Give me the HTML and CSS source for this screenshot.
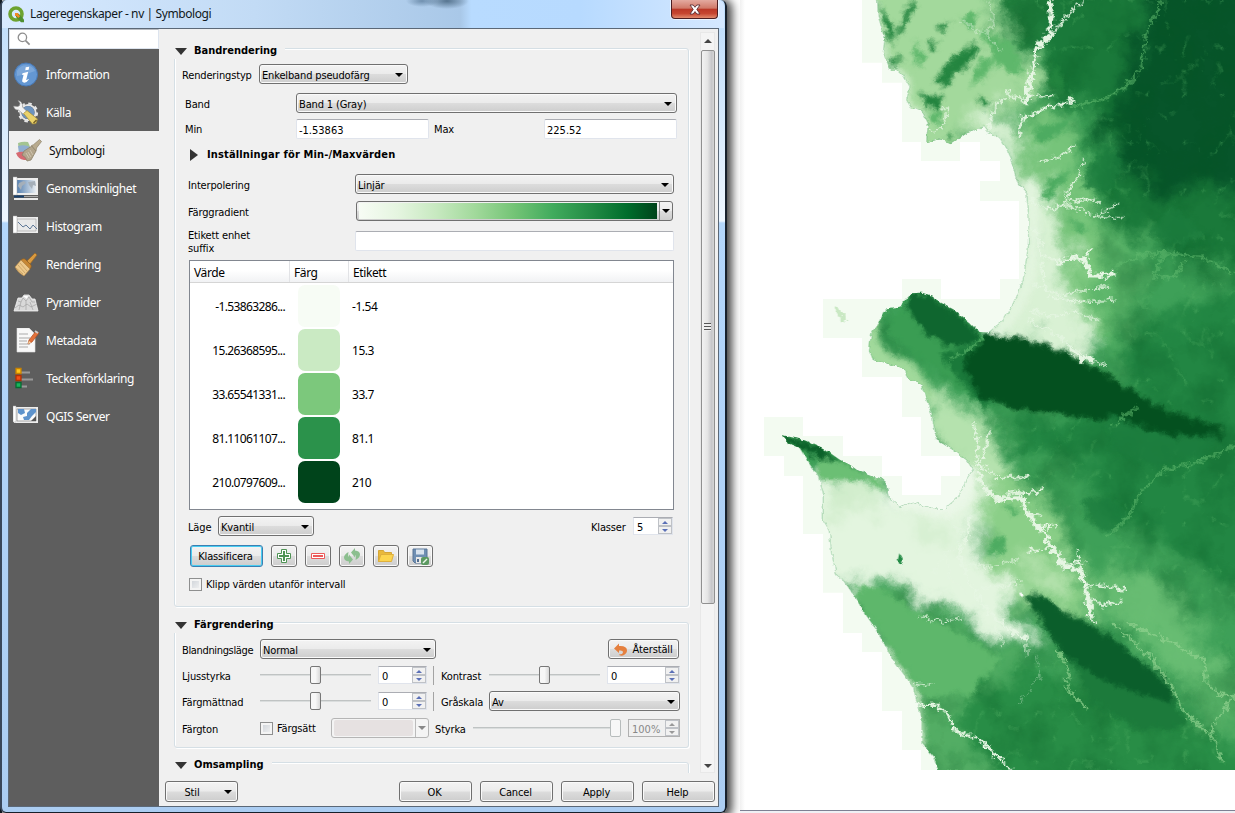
FILE: index.html
```html
<!DOCTYPE html>
<html lang="sv">
<head>
<meta charset="utf-8">
<title>Lageregenskaper - nv | Symbologi</title>
<link rel="stylesheet" href="styles.css">
</head>
<body>
<div class="screen">
<div class="window">
  <header class="titlebar">
    <svg class="logo" width="17" height="17" viewBox="0 0 17 17"><circle cx="8" cy="8" r="6" fill="none" stroke="#6da32f" stroke-width="3.6"/><path d="M8 8l3 0 5 5.5v2.8h-3L8 11z" fill="#4f8f31"/><path d="M7 7h3.4v1.5l1.7 1.7-1.8 1.7-1.8-1.8H7z" fill="#f08a24"/></svg>
    <h1 class="title">Lageregenskaper - nv | Symbologi</h1>
    <button class="close"><svg width="12" height="11" viewBox="0 0 12 11"><path d="M1 1h3.2L6 3.3 7.8 1H11L7.8 5.4 11 10H7.8L6 7.6 4.2 10H1l3.2-4.6z" fill="#fff" stroke="#5b3035" stroke-width=".9"/></svg></button>
  </header>
  <div class="client">
    <nav class="sidebar">
      <div class="search"><svg width="14" height="14" viewBox="0 0 14 14"><circle cx="5.4" cy="5.4" r="4.2" fill="none" stroke="#8e8e8e" stroke-width="1.3"/><path d="M8.6 8.6l4 4" stroke="#8e8e8e" stroke-width="1.7"/></svg></div>
      <a class="item"><svg width="26" height="26" viewBox="0 0 26 26"><circle cx="13" cy="12.500" r="11.500" fill="#6497d2" stroke="#4878b4"/><path d="M4 9a10 10 0 0 1 18 0q-9 4-18 5z" fill="#8cb2de" opacity=".6"/><path d="M12.7 5.2l3.5-.5-.5 3.100-3.400.4zM9.500 11.200l5.700-1.500-2 8.200q.8.3 2-1l.7.7q-2.400 3.600-5.300 3-1.900-.4-1.400-2.400l1.400-5.400-1.500.2z" fill="#fff"/></svg><span>Information</span></a>
      <a class="item"><svg width="26" height="26" viewBox="0 0 26 26"><g fill="none" stroke="#e6e6e6"><circle cx="15" cy="12.5" r="7.6" stroke-width="2"/><circle cx="15" cy="12.5" r="9" stroke-width="2.2" stroke-dasharray="3.5 3.57"/></g><circle cx="15" cy="12.5" r="6.5" fill="#6c93bf"/><path d="M.5 6q1 4.500 5 4l5 4.500 3.500-3L9.500 7Q10 1.500 5 .5L7 3.500Q7 6 4.500 6.500z" fill="#f2f2f2" stroke="#888" stroke-width=".6"/><path d="M10.500 13.500l3.500-3 10.500 8.500-1.500 4.500-3.500.5z" fill="#ead26b" stroke="#a28b39" stroke-width=".7"/><path d="M20.500 23l3-3" stroke="#735f27" stroke-width="1.500"/></svg><span>Källa</span></a>
      <a class="item active"><svg width="26" height="26" viewBox="0 0 26 26"><path d="M2 5q5-2 10-1l3 7-9 4q-4-5-4-10" fill="#a3c491"/><path d="M2 8q7-2 12 1l-4 8-7-1z" fill="#8faed0"/><path d="M0 15q4-2 9-1l4 8-5 0q-6-1-8-7" fill="#d66a72"/><path d="M8 13l8-5 4 5-5 9-4 1q-1-4-5-6z" fill="#b2a58c" stroke="#8c8068" stroke-width=".8"/><path d="M15.500 7.500l2-.8 6-5.200 2 2-5 6.500-.5 3z" fill="#b9ab8f" stroke="#8d8168" stroke-width=".7"/><path d="M10 15l3 5m-1-6l3 5m-1-7l3 5" stroke="#d5ccb8" stroke-width=".8"/></svg><span>Symbologi</span></a>
      <a class="item"><svg width="26" height="26" viewBox="0 0 26 26"><defs><linearGradient id="ocean"><stop stop-color="#5580b0"/><stop offset="1" stop-color="#e8edf2"/></linearGradient></defs><path d="M1 2h24v17H1z" fill="#ededed"/><path d="M4 4h19v13H4z" fill="url(#ocean)"/><path d="M6 7l5-2 2 2-4 3-1 4-3-4zm9-1l7-1 1 5-3-1-1 4-3-4z" fill="#a5afb9"/><path d="M0 1h4v18H0z" fill="#fff" stroke="#aaa" stroke-width=".5"/><path d="M1 20.500h10" stroke="#17406f" stroke-width="2"/><path d="M11 20.500h14" stroke="#aaa"/><path d="M1 23h24" stroke="#e8e8e8" stroke-width="2"/></svg><span>Genomskinlighet</span></a>
      <a class="item"><svg width="26" height="26" viewBox="0 0 26 26"><path d="M1 3h24v16H1z" fill="#ededed"/><path d="M4 5h19v12H4z" fill="#e9e9e9" stroke="#aaa" stroke-width=".7"/><path d="M0 2h4v17H0z" fill="#fff" stroke="#aaa" stroke-width=".5"/><path d="M5 8l5 5 3-2 4 4 3-4 4 4" fill="none" stroke="#5e7897"/></svg><span>Histogram</span></a>
      <a class="item"><svg width="26" height="26" viewBox="0 0 26 26"><path d="M14 9l8-8 2 2-7 9" fill="#d99a40" stroke="#986523" stroke-width=".7"/><path d="M8 8q2-2 4-1l6 6q1 2-1 4z" fill="#c68735" stroke="#8e5d20" stroke-width=".7"/><path d="M8 8l9 9-6 7q-6-3-9-9z" fill="#ecc88b" stroke="#b58643" stroke-width=".6"/><path d="M5 13l7 8m-5-10l7 8M3 16l7 6" stroke="#bf985b" stroke-width=".7"/></svg><span>Rendering</span></a>
      <a class="item"><svg width="26" height="26" viewBox="0 0 26 26"><path d="M1 21l4-13h4l2-3h5l3 4h3l3 12z" fill="#d9d9d9" stroke="#f3f3f3" stroke-width=".8"/><path d="M5 11l3 1 2-4 3 3 3-4 3 5 3 0M2 18l4-3 4 2 4-3 4 3 6-3M8 12l-2 8m7-9v9m4-8l3 8" fill="none" stroke="#9b9b9b" stroke-width=".6"/><path d="M10 6l4 3 1-3z" fill="#fff"/></svg><span>Pyramider</span></a>
      <a class="item"><svg width="26" height="26" viewBox="0 0 26 26"><path d="M4 0h12l6 6v18H4z" fill="#f8f8f8" stroke="#ddd" stroke-width=".6"/><path d="M6 6h9M6 10h11M6 13h8M6 16h11M6 19h9" stroke="#aaa"/><path d="M15 16l1-4 7-9 3 2-7 9z" fill="#e3713a" stroke="#ae4f23" stroke-width=".7"/><path d="M15 16l1-3 2 1.500z" fill="#f6d9ac"/><path d="M22 3l3 2" stroke="#ccc" stroke-width="2"/></svg><span>Metadata</span></a>
      <a class="item"><svg width="26" height="26" viewBox="0 0 26 26"><path d="M8 6.500h9M8 13.500h12M8 20.500h6" stroke="#999" stroke-width="2"/><path d="M3 2.500h5v5H3z" fill="#ffc61a" stroke="#c98200" stroke-width="1.300"/><path d="M3 9.500h5v5H3z" fill="#f24e15" stroke="#b23000" stroke-width="1.300"/><path d="M3 16.500h5v5H3z" fill="#18b55c" stroke="#066b31" stroke-width="1.300"/></svg><span>Teckenförklaring</span></a>
      <a class="item"><svg width="26" height="26" viewBox="0 0 26 26"><path d="M1 3h24v16H1z" fill="#eee"/><path d="M4 5h19v12H4z" fill="#fbfbfb" stroke="#888" stroke-width=".7"/><path d="M5 5h6l1 4-4 2-3-2zm9 4l4-4h5v3l-4 4-3 4h-5l-1-3 4-1z" fill="#5e93cc"/><path d="M18 17l5-5v5z" fill="#555"/><path d="M0 2h3v16H0z" fill="#fff" stroke="#aaa" stroke-width=".5"/></svg><span>QGIS Server</span></a>
    </nav>
    <main class="main">
      <div class="scroll-area">
        <div class="content">
          <section class="group band">
            <h2 class="legend"><i class="tri"></i>Bandrendering</h2>
            <div class="row r-type"><label>Renderingstyp</label><div class="combo">Enkelband pseudofärg<i class="arrow"></i></div></div>
            <div class="row r-band"><label>Band</label><div class="combo">Band 1 (Gray)<i class="arrow"></i></div></div>
            <div class="row r-min"><label>Min</label><div class="field">-1.53863</div><label class="max">Max</label><div class="field">225.52</div></div>
            <h3 class="sub"><i class="tri right"></i>Inställningar för Min-/Maxvärden</h3>
            <div class="row r-interp"><label>Interpolering</label><div class="combo">Linjär<i class="arrow"></i></div></div>
            <div class="row r-ramp"><label>Färggradient</label><div class="ramp"><div class="ramp-fill"></div><div class="ramp-drop"><i class="arrow"></i></div></div></div>
            <div class="row r-suffix"><label>Etikett enhet<br>suffix</label><div class="field"></div></div>
            <div class="table">
              <div class="thead"><span>Värde</span><span>Färg</span><span>Etikett</span></div>
              <div class="tr"><span>-1.53863286...</span><b class="c1"></b><span>-1.54</span></div>
              <div class="tr"><span>15.26368595...</span><b class="c2"></b><span>15.3</span></div>
              <div class="tr"><span>33.65541331...</span><b class="c3"></b><span>33.7</span></div>
              <div class="tr"><span>81.11061107...</span><b class="c4"></b><span>81.1</span></div>
              <div class="tr"><span>210.0797609...</span><b class="c5"></b><span>210</span></div>
            </div>
            <div class="row r-mode"><label>Läge</label><div class="combo">Kvantil<i class="arrow"></i></div><label class="classes">Klasser</label><div class="spin">5<span class="steps"><i></i><i></i></span></div></div>
            <div class="tools">
              <button class="btn focus">Klassificera</button>
              <button class="btn"><svg width="16" height="16" viewBox="0 0 16 16"><path d="M5.500 1.500h5v4h4v5h-4v4h-5v-4h-4v-5h4z" fill="#fff" stroke="#4f9455"/><path d="M8 3v10M3 8h10" stroke="#4f9455" stroke-width="2"/></svg></button>
              <button class="btn"><svg width="16" height="16" viewBox="0 0 16 16"><path d="M1.500 5.500h13v5h-13z" fill="#fff" stroke="#ec5a5a"/><path d="M3 8h10" stroke="#ec5a5a" stroke-width="2"/></svg></button>
              <button class="btn"><svg width="18" height="16" viewBox="0 0 18 16"><path d="M8 4.500L12 0v2.500q5 .5 5 4 0 3-4.500 5.500.8-4-.5-5V9.500zM10 11.500L6 16v-2.500q-5-.5-5-4Q1 6.500 5.500 4q-.8 4 .5 5V6.500z" fill="#8cbf8f"/></svg></button>
              <button class="btn"><svg width="18" height="16" viewBox="0 0 18 16"><path d="M1.500 13.500v-11h5l1 2h7v2H4z" fill="#e9b93c" stroke="#d5a636"/><path d="M1.500 13.500L4 6.500h12.500l-2 7z" fill="#fcd54f" stroke="#dfb03d"/></svg></button>
              <button class="btn"><svg width="17" height="17" viewBox="0 0 17 17"><path d="M1 1h14v14H3l-2-2z" fill="#6f8fb3" stroke="#587596"/><path d="M4 1.500h8v5H4z" fill="#d9e3ee"/><path d="M4 9h8v6H4z" fill="#e8e8e8"/><path d="M5 11h2v3H5z" fill="#526d8d"/><rect x="9" y="9" width="8" height="8" rx="2" fill="#5b9961"/><path d="M11 15l4-4" stroke="#e9f4e9" stroke-width="1.500"/></svg></button>
            </div>
            <div class="clip"><i class="check"></i>Klipp värden utanför intervall</div>
          </section>
          <section class="group color">
            <h2 class="legend"><i class="tri"></i>Färgrendering</h2>
            <div class="row r-blend"><label>Blandningsläge</label><div class="combo">Normal<i class="arrow"></i></div><button class="btn reset"><svg width="14" height="13" viewBox="0 0 14 13"><path d="M0 5.500L5 .5V3q8-.5 8 4.500 0 3-4 5-4 .5-4-1 4 0 4-2.500Q9 7 5 7.500V10z" fill="#e5803f"/></svg>Återställ</button></div>
            <div class="row r-two"><label>Ljusstyrka</label><div class="slider"><i></i></div><div class="spin">0<span class="steps"><i></i><i></i></span></div><label class="second">Kontrast</label><div class="slider"><i></i></div><div class="spin wide">0<span class="steps"><i></i><i></i></span></div></div>
            <div class="row r-two sat"><label>Färgmättnad</label><div class="slider"><i></i></div><div class="spin">0<span class="steps"><i></i><i></i></span></div><label class="second">Gråskala</label><div class="combo">Av<i class="arrow"></i></div></div>
            <div class="row r-hue"><label>Färgton</label><i class="check"></i><label class="colorize">Färgsätt</label><div class="ramp off"><div class="ramp-fill"></div><div class="ramp-drop"><i class="arrow"></i></div></div><label class="strength">Styrka</label><div class="slider off"><i></i></div><div class="spin off">100%<span class="steps"><i></i><i></i></span></div></div>
          </section>
          <section class="group resample"><h2 class="legend"><i class="tri"></i>Omsampling</h2></section>
        </div>
        <div class="scrollbar"><i class="up"></i><div class="thumb"><i></i></div><i class="down"></i></div>
      </div>
      <footer class="footer">
        <button class="btn style">Stil<i class="arrow"></i></button>
        <button class="btn">OK</button><button class="btn">Cancel</button><button class="btn">Apply</button><button class="btn">Help</button>
      </footer>
    </main>
  </div>
</div>
<div class="canvas">
<svg class="map" width="495" height="810" viewBox="0 0 1485 2430">
  <defs>
    <clipPath id="land"><path d="M410 -60L415 50 435 110 430 160 450 205 490 225 510 260 500 300 515 325 545 330 565 370 560 425 600 418 635 430 680 400 730 380 745 400 780 415 800 445 815 490 835 550 860 580 867 650 865 740 850 840 820 910 790 960 745 998 715 995 690 970 640 930 585 900 575 887 545 878 515 880 480 920 440 925 420 960 395 1000 388 1050 400 1080 440 1090 490 1105 510 1140 545 1155 560 1200 575 1240 590 1320 640 1350 680 1380 700 1410 680 1440 655 1490 610 1530 560 1520 520 1505 480 1520 445 1490 438 1450 420 1435 350 1410 330 1395 300 1380 250 1345 200 1322 125 1305 145 1330 180 1345 200 1380 235 1430 250 1480 250 1560 268 1590 275 1660 290 1725 310 1740 345 1790 375 1840 410 1890 440 1940 460 1980 520 2060 530 2100 545 2150 545 2230 580 2270 595 2310V2400H1560V-60Z"/></clipPath>
    <clipPath id="extent"><path d="M0 0H1485V2310H0z"/></clipPath>
    <filter id="soft" x="-10%" y="-10%" width="120%" height="120%" color-interpolation-filters="sRGB"><feGaussianBlur stdDeviation="24" result="b"/><feTurbulence type="fractalNoise" baseFrequency=".01" numOctaves="5" seed="4"/><feDisplacementMap in="b" scale="130" xChannelSelector="R" yChannelSelector="G"/></filter>
    <filter id="edge" x="-10%" y="-10%" width="120%" height="120%" color-interpolation-filters="sRGB"><feGaussianBlur stdDeviation="7" result="b"/><feTurbulence type="fractalNoise" baseFrequency=".03" numOctaves="4" seed="9"/><feDisplacementMap in="b" scale="34" xChannelSelector="R" yChannelSelector="G"/></filter>
    <filter id="creek" x="-10%" y="-10%" width="120%" height="120%" color-interpolation-filters="sRGB"><feTurbulence type="fractalNoise" baseFrequency=".06" numOctaves="3" seed="3"/><feDisplacementMap in="SourceGraphic" scale="30" xChannelSelector="R" yChannelSelector="G"/><feGaussianBlur stdDeviation="1.300"/></filter>
    <filter id="shore" x="-5%" y="-5%" width="110%" height="110%" color-interpolation-filters="sRGB"><feTurbulence type="fractalNoise" baseFrequency=".05" numOctaves="3" seed="8"/><feDisplacementMap in="SourceGraphic" scale="14" xChannelSelector="R" yChannelSelector="G"/></filter>
    <filter id="beach" x="-20%" y="-20%" width="140%" height="140%"><feGaussianBlur stdDeviation="9"/></filter>
    <filter id="darkNoise" x="0" y="0" width="100%" height="100%" color-interpolation-filters="sRGB"><feTurbulence type="fractalNoise" baseFrequency=".008 .007" numOctaves="7" seed="12"/><feColorMatrix values="0 0 0 0 .02  0 0 0 0 .33  0 0 0 0 .13  2.600 0 0 0 -1.050"/></filter>
    <filter id="veins" x="0" y="0" width="100%" height="100%" color-interpolation-filters="sRGB"><feTurbulence type="turbulence" baseFrequency=".009 .007" numOctaves="5" seed="31"/><feColorMatrix values="0 0 0 0 .36  0 0 0 0 .72  0 0 0 0 .42  0 -7 0 0 1.100"/></filter>
  </defs>
  <path fill="#f3fbf1" d="M366 0V188H426V248H486V426H543V483H660V426H720V483H780V543H720V603H837V837H780V897H603V837H486V897H249V1014H366V1131H486V1251H543V1368H660V1428H603V1485H486V1428H426V1368H309V1308H189V1251H72V1368H132V1428H189V1602H249V1778H309V1899H366V1956H426V2133H486V2250H543V2310H1485V0Z"/>
  <g clip-path="url(#extent)"><g filter="url(#shore)"><g clip-path="url(#land)">
    <path fill="#3ea058" d="M-60-60H1560V2400H-60z"/>
    <g filter="url(#soft)">
      <path fill="#1f7c3c" d="M740-90H1000L900 150 810 140z"/>
      <path fill="#1a793a" d="M980-90H1600V860L1390 790 1160 700 1060 520 1100 350 930 270 920 80z"/>
      <path fill="#07552a" d="M1240-90H1600V540L1250 580 1090 440 1150 300z"/>
      <path fill="#5cb56a" d="M1000 600L1220 720 1180 960 1130 1100 960 900z"/>
      <path fill="#228643" d="M1130 1030L1600 820V1760L1400 1720 1220 1600 1060 1500 1040 1400 790 1360 830 1260 1200 1240z"/>
      <path fill="#53ad64" d="M330 1790L480 1790 700 1920 840 2000 800 2380 540 2380 500 2060z"/>
      <path fill="#288d46" d="M720 2040L940 2020 1060 2090 1250 2080 1330 2170 1560 2280V2400H840L640 2200z"/>
      <path fill="#53ad64" d="M1320 2060L1560 1990V2200H1400z"/>
    </g>
    <path d="M0 0H1485V2310H0z" filter="url(#darkNoise)" opacity=".3"/>
    <path d="M0 0H1485V2310H0z" filter="url(#veins)" opacity=".38"/>
    <g filter="url(#soft)">
      <path fill="#a3d99c" d="M340-90H720L790 60 810 180 900 150 900 280 800 330 720 400 560 500 400 250z"/>
      <path fill="#80ca80" d="M820 350L1000 330 1040 560 1060 800 1090 1000 930 1020 860 750z" opacity=".85"/>
      <path fill="#d9f1d4" d="M740 300L830 370 870 540 960 620 960 700 980 830 1050 960 1060 1070 900 1040 720 1020 830 860 860 700 800 450 700 420z"/>
      <path fill="#b5e2ae" d="M540 1160L660 1180 780 1320 820 1460 800 1500 700 1460 570 1330z"/>
      <path fill="#6dc075" d="M1020 1700L1240 1730 1400 1900 1440 2040 1330 2080 1270 2000z" opacity=".9"/>
      <path fill="#8bcf88" d="M720 1430L850 1450 930 1500 1000 1700 1100 1850 1000 1850 840 1800 740 1740z"/>
      <path fill="#b3e1ac" d="M850 1680L960 1690 1000 1780 860 1780z"/>
      <path fill="#e3f5df" d="M150 1440L440 1440 540 1500 700 1410 740 1500 700 1640 800 1740 830 1830 900 1900 860 1960 700 1880 560 1800 440 1750 260 1790 200 1600z"/>
      <path fill="#c9eac3" d="M260 1450L420 1440 420 1530 260 1560zM500 1520L620 1580 660 1650 540 1590z" opacity=".7"/>
    </g>
    <g filter="url(#beach)" fill="none">
      <path d="M388 950Q360 1080 500 1110L560 1200" stroke="#a1d99b" stroke-width="60"/>
      <path d="M868 540Q900 770 850 880T740 1010" stroke="#e2f4de" stroke-width="40"/>
      <path d="M690 1400Q690 1490 620 1530L440 1500" stroke="#eaf7e7" stroke-width="46"/>
      <path d="M400 0L440 190 500 240 500 320 560 350M440 1940L530 2080 545 2240" stroke="#d5efcf" stroke-width="20"/>
      <path d="M370 1840L410 1890 440 1940" stroke="#e5f5e0" stroke-width="5"/>
    </g>
    <g filter="url(#edge)">
      <path fill="#3a9d53" d="M540 900L600 915 715 1000 735 1010 760 1060 700 1190 640 1150 540 1080 450 1010 450 960 490 930z"/>
      <path fill="#0f662f" d="M510 882L560 878 640 932 705 985 710 1025 650 1040 560 1010 505 930z"/>
      <path fill="#1a793a" d="M600 1060L720 1030 760 1100 740 1240 680 1170z"/>
      <path fill="#04501f" d="M735 1005L850 1013 950 1045 1060 1100 1180 1170 1250 1220 1440 1280 1450 1320 1290 1310 1180 1270 1000 1250 860 1230 720 1200 670 1090z"/>
      <path fill="#0b6029" d="M115 1300L190 1318 250 1345 285 1378 230 1374 190 1348 130 1325z"/>
      <path fill="#6bbf74" d="M230 1378L290 1378 350 1408 425 1440 435 1475 370 1440 240 1440z"/>
      <path fill="#5eb76b" d="M340 1785L370 1755 420 1765 520 1830 560 1850 700 1920 780 1970 700 2080 560 2090 480 1990z"/>
      <path fill="#0b5e2b" d="M850 1785L900 1785 980 1840 1100 1900 1200 1980 1280 2040 1310 2120 1200 2110 1070 2060 990 1990 920 1890z"/>
      <path fill="#1c7a3b" d="M990 1980L1130 2060 1310 2110 1350 2180 1200 2190 1060 2110z"/>
      <path fill="#23843f" d="M420 10L460 80 455 140 440 110zM500 20L530 0 490 90 460 130zM640 170L700 130 720 145 680 200 640 220 620 265 580 250zM540 280L610 290 600 330 560 320zM570 130L590 125 590 150 570 150zM590 80L630 65 610 100zM710 290L760 310 730 330zM925 200L960 200 975 275 940 260zM450 180L490 170 455 210zM620 400L640 410 630 430z"/>
      <path fill="#5eb76b" d="M720 180L760 170 750 220 690 260zM660 60L720 30 700 90zM560 340L610 330 600 380zM520 120L560 170 530 200zM720 90L820 130 850 230 770 200z"/>
      <path fill="#4dab61" d="M870 400L1010 340 980 390 910 430zM900 600L930 540 1000 500 930 600zM980 650L1050 690 1020 700zM740 1610L790 1620 800 1650 750 1670zM790 1505L840 1540 820 1550zM580 1820L640 1845 600 1840z"/>
      <path fill="#1c7c3d" d="M1060 480L1110 430 1150 500 1100 580 1020 560zM1220 700L1300 620 1400 700 1320 740zM1020 1500L1100 1490 1160 1550 1120 1600 1060 1580zM1100 1240L1300 1310 1440 1300 1400 1370 1250 1400 1120 1350z" opacity=".8"/>
    </g>
    <path fill="#238b45" d="M478 1660l10 18-2 16-8-2-4-14z"/>
    <g filter="url(#creek)" fill="none" stroke-linejoin="round">
      <g stroke="#5fb76c" stroke-width="8" opacity=".6"><path d="M1265 0L1220 100 1205 200 1160 260 1090 300 990 320M1485 820L1380 770 1270 760 1200 765 1130 800M1100 1610L1160 1560 1200 1480 1270 1410 1360 1390 1485 1340M1270 760L1240 830 1310 830 1330 780M630 1080L700 1040 730 1010M1120 1280L1190 1220"/></g>
      <g stroke="#8fd08d" stroke-width="7" opacity=".75"><path d="M950 1950L985 2000 980 2060 1040 2130M1120 1870L1240 1980 1280 2040 1330 2130 1400 2200M1160 1870L1300 1930 1390 1980 1400 2050 1440 2085 1485 2085 1410 2190 1450 2290"/></g>
      <g stroke="#e6f6e3">
        <path stroke-width="15" d="M930 0L935 50 930 100 890 150 880 200 865 260 858 315"/>
        <path stroke-width="5" d="M1030 0L970 60 935 110M860 290L790 295 765 320 745 395M870 285L940 290M800 270L810 295"/>
        <path stroke-width="4" opacity=".55" d="M750 0L760 60 740 110M660 60L740 110 790 160"/>
        <path stroke-width="7" d="M840 370L860 350 920 325 1000 300M840 350L840 410"/>
        <path stroke-width="5" d="M870 600L920 625 980 615 1080 650 1150 655M975 610L985 570 1020 520 1030 480M980 605L1040 595 1080 610M1080 640L1140 610M870 680L895 700 900 760 950 785M900 790L915 850M895 485L960 470 1000 440"/>
        <path stroke-width="13" d="M945 790L1000 770 1035 780 1050 825 1105 828 1125 810M1040 770L1055 745"/>
        <path stroke-width="4" d="M880 850L960 885 1110 860M920 890L1020 905 1130 900M870 930L940 948 1010 935 1080 965M860 960L960 1010 1010 1050 1100 1100"/>
        <path stroke-width="14" d="M990 1040L1020 1075 1060 1080M710 1410L740 1475 780 1500 845 1490 865 1545 910 1600 940 1650 975 1700 1020 1710 1045 1800 1055 1850"/>
        <path stroke-width="6" d="M1055 1850L1070 1870M700 1270L715 1330 710 1390 770 1430 870 1432M750 1290L720 1400M845 1485L910 1470M865 1545L900 1545M895 1580L950 1580M940 1640L860 1655M975 1690L1035 1690M1040 1760L1080 1755 1160 1770M1050 1795L1090 1815 1145 1805M780 1500L810 1480 850 1475M1010 1650L1025 1710"/>
        <path stroke-width="8" d="M685 1550L690 1600 660 1650 665 1690 700 1770 750 1840 810 1890 860 1920"/>
        <path stroke-width="3" d="M610 1540L640 1570 675 1615 600 1680 580 1720M670 1690L740 1700 840 1680M700 1770L840 1745M620 1680L630 1730 680 1780M750 1840L790 1940M860 1900L860 1970"/>
        <path stroke-width="3" opacity=".5" d="M890 1970L900 2030 840 2110"/>
        <path stroke-width="8" d="M525 2115L590 2115 630 2150 645 2190 730 2225 780 2280 820 2315"/>
        <path stroke-width="4" d="M520 2050L580 2055M540 1850L610 1865 660 1855M610 320L625 330 605 385 570 395"/>
      </g>
    </g>
    <path d="M838 1778l8 0 9 6-7 8-8-7z" fill="#fff"/>
  </g></g></g>
  <g filter="url(#creek)"><path d="M285 920L300 930 325 955 310 970 290 940z" fill="#c9e8c3"/></g>
</svg>
</div>
</div>
</body>
</html>
```
FILE: styles.css
```css
* { box-sizing: border-box; }
body { margin: 0; background: #fff; color: #000; font: 11px/14px "DejaVu Sans Condensed", "DejaVu Sans", sans-serif; letter-spacing: -.15px; }
h1, h2, h3 { margin: 0; font-size: inherit; }
button { font: inherit; letter-spacing: inherit; color: inherit; padding: 0; }
i { font-style: normal; flex: none; }
svg { flex: none; display: block; }
.screen { display: grid; grid-template-columns: 740px 495px; width: 1235px; height: 813px; overflow: hidden; background: linear-gradient(90deg, #1a2530 0 2px, #fff 2px); }
.window { width: 727px; height: 813px; padding: 0 8px 6px 6px; border: solid #17202b; border-width: 0 2px 1px; border-left-color: #39475a; border-radius: 6px; box-shadow: 2px 2px 10px 3px rgba(0,0,0,.75); background: linear-gradient(180deg, #bcdcfb 0, #d2e7fc 100px, #edf6ff 221px, #b3d6fb 223px, #abcdf2 100%); }
.titlebar { height: 28px; margin: 0 -7px 0 -6px; padding-left: 6px; display: flex; align-items: center; background: radial-gradient(ellipse 22px 8px at 445px 1px, #56748f, transparent), radial-gradient(ellipse 16px 6px at 420px 1px, #6f8fae, transparent), linear-gradient(90deg, #d8eaff 0, #c2dbf5 35%, #a9c8e8 63.5%, #b8dbff 65%, #b7daff 80%, #d5e8ff 100%); border-radius: 6px 6px 0 0; }
.title { margin-left: 5px; flex: 1; font: 12px/16px "Noto Sans", sans-serif; letter-spacing: -.4px; color: #101820; }
.close { width: 47px; height: 19px; margin-right: 6px; align-self: flex-start; display: flex; align-items: center; justify-content: center; border: 1px solid #4c1e22; border-top: 0; border-radius: 0 0 4px 4px; background: linear-gradient(#e4aaa0 0, #d07868 46%, #ba3727 50%, #c64631 75%, #e28a6d); box-shadow: 0 0 0 1px rgba(255,255,255,.6); }
.client { display: flex; width: 711px; height: 779px; border: 1px solid #5b6877; background: #f0f0f0; }
.sidebar { width: 150px; background: #5e5e5e; color: #fff; font: 12px/16px "Noto Sans", sans-serif; letter-spacing: -.4px; }
.search { height: 20px; margin-bottom: 6px; padding: 2px 0 0 7px; background: #fff; border: 1px solid #dde4ee; border-top-color: #b8bcc2; }
.item { display: flex; align-items: center; gap: 7px; height: 38px; padding: 1px 0 0 4px; }
.item span { padding-top: 1px; }
.item.active { background: #f0f0f0; color: #111; padding-left: 7px; }
.main { width: 559px; padding: 3px 3px 0 6px; }
.scroll-area { display: flex; height: 741px; }
.content { width: 535px; overflow: hidden; padding: 16px 11px 0 9px; }
.group { width: 515px; border: 1px solid #d5dfe5; border-radius: 3px; box-shadow: inset 1px 1px #fff, 1px 1px #fff; }
.band { height: 559px; }
.color { height: 126px; margin-top: 15px; }
.resample { height: 40px; margin-top: 14px; }
.legend, .sub { display: flex; align-items: center; font: bold 11px/16px "DejaVu Sans Condensed", "DejaVu Sans", sans-serif; letter-spacing: 0; height: 16px; color: #000; }
.legend { width: 111px; margin: -6px 0 0 -1px; background: #f0f0f0; }
.color .legend, .resample .legend { width: 98px; }
.tri { width: 12px; margin: 0 7px 0 1px; border: 6px solid transparent; border-top: 7px solid #333; border-bottom: 0; }
.tri.right { width: 8px; margin: 0 9px 0 0; border: 6px solid transparent; border-left: 8px solid #333; border-right: 0; }
.row { display: flex; align-items: center; height: 20px; padding-left: 7px; white-space: nowrap; }
.row label { flex: none; padding-top: 3px; }
.combo, .btn { height: 20px; border: 1px solid #707070; border-radius: 3px; background: linear-gradient(#f3f3f3 0, #ebebeb 48%, #dcdcdc 52%, #cdcdcd 100%); box-shadow: inset 0 0 0 1px #fafafa; }
.combo { display: flex; align-items: center; justify-content: space-between; padding: 3px 4px 0 2px; flex: none; }
.arrow { width: 8px; height: 4px; margin-bottom: 1px; border: 4px solid transparent; border-top: 4px solid #000; border-bottom: 0; }
.field { height: 20px; padding: 4px 2px 0; border: 1px solid #e0e4ec; border-top-color: #abadb3; border-radius: 2px; background: #fff; flex: none; }
.r-type { margin-top: 5px; }
.r-type label { width: 77px; }
.r-type .combo { width: 149px; }
.r-band { margin-top: 9px; padding-left: 10px; }
.r-band label, .r-min label { width: 111px; }
.r-band .combo { width: 381px; }
.r-min { margin-top: 6px; padding-left: 10px; }
.r-min label { padding-top: 2px; }
.r-min .field { width: 133px; letter-spacing: 0; }
.r-min .max { width: 115px; padding-left: 5px; }
.sub { margin: 8px 0 0 15px; letter-spacing: .15px; }
.r-interp { margin-top: 11px; padding-left: 13px; }
.r-interp label, .r-suffix label { width: 167px; }
.r-interp .combo, .r-suffix .field { width: 319px; }
.r-ramp { margin-top: 7px; padding-left: 13px; }
.r-ramp > label { width: 168px; }
.ramp { display: flex; width: 317px; height: 20px; border: 1px solid #707070; border-radius: 3px; background: linear-gradient(#f3f3f3 0, #ebebeb 48%, #dcdcdc 52%, #cdcdcd 100%); }
.ramp-fill { flex: 1; margin: 1px 2px; background: linear-gradient(90deg, #f7fcf5, #e5f5e0 13%, #c7e9c0 26%, #a1d99b 39%, #74c476 52%, #41ab5d 65%, #238b45 78%, #006d2c 90%, #00441b); }
.ramp-drop { width: 13px; border-left: 1px solid #8a8a8a; display: flex; align-items: center; justify-content: center; }
.r-suffix { margin-top: 10px; padding-left: 13px; line-height: 12.5px; }
.table { width: 485px; height: 250px; margin: 9px 0 0 14px; border: 1px solid #828790; background: #fff; font: 12px/16px "Noto Sans", sans-serif; letter-spacing: -.62px; }
.thead, .tr { display: grid; grid-template-columns: 100px 59px 1fr; }
.thead { height: 22px; border-bottom: 1px solid #d5d5d5; background: linear-gradient(#fff 45%, #f1f2f4); letter-spacing: -.4px; }
.thead span { padding: 4px 0 0 4px; border-right: 1px solid #e2e3e6; }
.thead span:last-child { border: 0; }
.tr { height: 44px; align-items: center; }
.tr span:first-child { text-align: right; padding-right: 5px; }
.tr b { width: 42px; height: 42px; margin-left: 8px; margin-top: 2px; border-radius: 7px; }
.tr span:last-child { padding-left: 3px; letter-spacing: -.45px; }
.tr span { padding-top: 4px; }
.c1 { background: #f7fcf5; } .c2 { background: #caeac3; } .c3 { background: #7cc87c; } .c4 { background: #2b924b; } .c5 { background: #00441b; }
.r-mode { margin-top: 6px; padding-left: 13px; }
.r-mode label { width: 30px; }
.r-mode .combo { width: 96px; }
.r-mode .classes { width: 42px; margin-left: 277px; }
.spin { display: flex; justify-content: space-between; width: 40px; height: 18px; padding: 3px 0 0 3px; border: 1px solid #e0e4ec; border-top-color: #abadb3; background: #fff; flex: none; }
.steps { display: grid; grid-template-rows: 8px 8px; gap: 0; width: 14px; height: 16px; margin-top: -3px; }
.steps i { border: 1px solid #bfc2c7; background: #f1f1f1; display: flex; align-items: center; justify-content: center; }
.steps i::before { content: ""; border: 3px solid transparent; border-bottom: 3px solid #5b70b7; border-top: 0; }
.steps i + i::before { transform: rotate(180deg); }
.tools { display: flex; gap: 8px; margin: 9px 0 0 15px; }
.btn { display: flex; align-items: center; justify-content: center; width: 26px; height: 22px; }
.btn.focus { width: 73px; padding: 1px 2px 0 0; border-color: #3c7fb1; box-shadow: inset 0 0 0 1px #48cdf2; }
.clip { display: flex; align-items: center; gap: 4px; margin: 10px 0 0 14px; height: 15px; letter-spacing: -.19px; }
.check { width: 13px; height: 13px; border: 1px solid #8e8f8f; background: linear-gradient(135deg, #cbd0d6, #f5f5f5); box-shadow: inset 0 0 0 2px #f4f4f4; }
.r-blend { margin-top: 6px; }
.r-blend label { width: 78px; letter-spacing: -.35px; }
.r-blend .combo { width: 176px; }
.btn.reset { width: 71px; height: 20px; margin-left: 172px; gap: 4px; padding-top: 1px; }
.r-two { height: 20px; margin-top: 6px; }
.r-two > label { width: 78px; padding-top: 3px; }
.slider { width: 111px; height: 19px; display: flex; align-items: center; justify-content: center; background: linear-gradient(#b2b6b6, #e7eaea) 0 8px / 100% 2px no-repeat; flex: none; }
.slider i { width: 11px; height: 18px; border: 1px solid #777; border-radius: 2px; background: linear-gradient(90deg, #f7f7f7 50%, #d9d9d9); }
.r-two .spin { width: 49px; margin-left: 7px; }
.r-two .second { width: 56px; height: 19px; padding: 4px 0 0 7px; margin-left: 6px; border-left: 1px solid #a3a3a3; }
.r-two .wide { width: 73px; margin-left: 7px; }
.sat { margin-top: 6px; }
.sat .combo { width: 191px; }
.r-hue { margin-top: 7px; }
.r-hue > label:first-child { width: 78px; padding-top: 3px; }
.r-hue .colorize { width: 54px; margin-left: 4px; padding-top: 2px; }
.ramp.off { width: 98px; border-color: #b5b5b5; background: #f4f4f4; }
.off .ramp-fill { background: #e6e1e1; border-radius: 2px; }
.off .ramp-drop { border-color: #bbb; }
.off .arrow { border-top-color: #888; }
.r-hue .strength { width: 38px; margin-left: 6px; }
.slider.off { width: 148px; justify-content: flex-end; }
.slider.off i { border-color: #b7bcbc; background: #f7f7f7; }
.spin.off { width: 52px; margin-left: 7px; color: #888; background: #f0f0f0; border-color: #b0b0b0; letter-spacing: 0; }
.off .steps i::before { border-bottom-color: #999; }
.scrollbar { width: 15px; background: #f4f4f4; border: 1px solid #e8e8e8; display: flex; flex-direction: column; align-items: center; }
.up, .down { border: 4px solid transparent; }
.up { margin: 6px 0 4px; border-bottom: 4px solid #444; border-top: 0; }
.thumb { width: 14px; height: 554px; margin-top: 3px; border: 1px solid #909090; border-radius: 2px; background: linear-gradient(90deg, #f2f2f2 0, #e5e5e5 45%, #c6c6c9 80%, #d6d6d6); display: flex; align-items: center; justify-content: center; }
.thumb i { width: 7px; height: 8px; background: repeating-linear-gradient(#555 0 1px, #eee 1px 3px); }
.down { margin-top: auto; margin-bottom: 4px; border-top: 4px solid #444; border-bottom: 0; }
.footer { display: flex; gap: 8px; padding-top: 8px; }
.footer .btn { width: 73px; height: 21px; padding: 2px 2px 0 0; }
.footer .style { margin-right: 153px; gap: 24px; padding-left: 15px; }
.canvas { background: linear-gradient(90deg, #f0f0f0, #fff 5px); height: 813px; border-bottom: 2px solid #f0f0f4; }
.canvas::after { content: ""; display: block; width: 100%; height: 1px; background: #7e8093; }
.map { display: block; overflow: hidden; }
```
